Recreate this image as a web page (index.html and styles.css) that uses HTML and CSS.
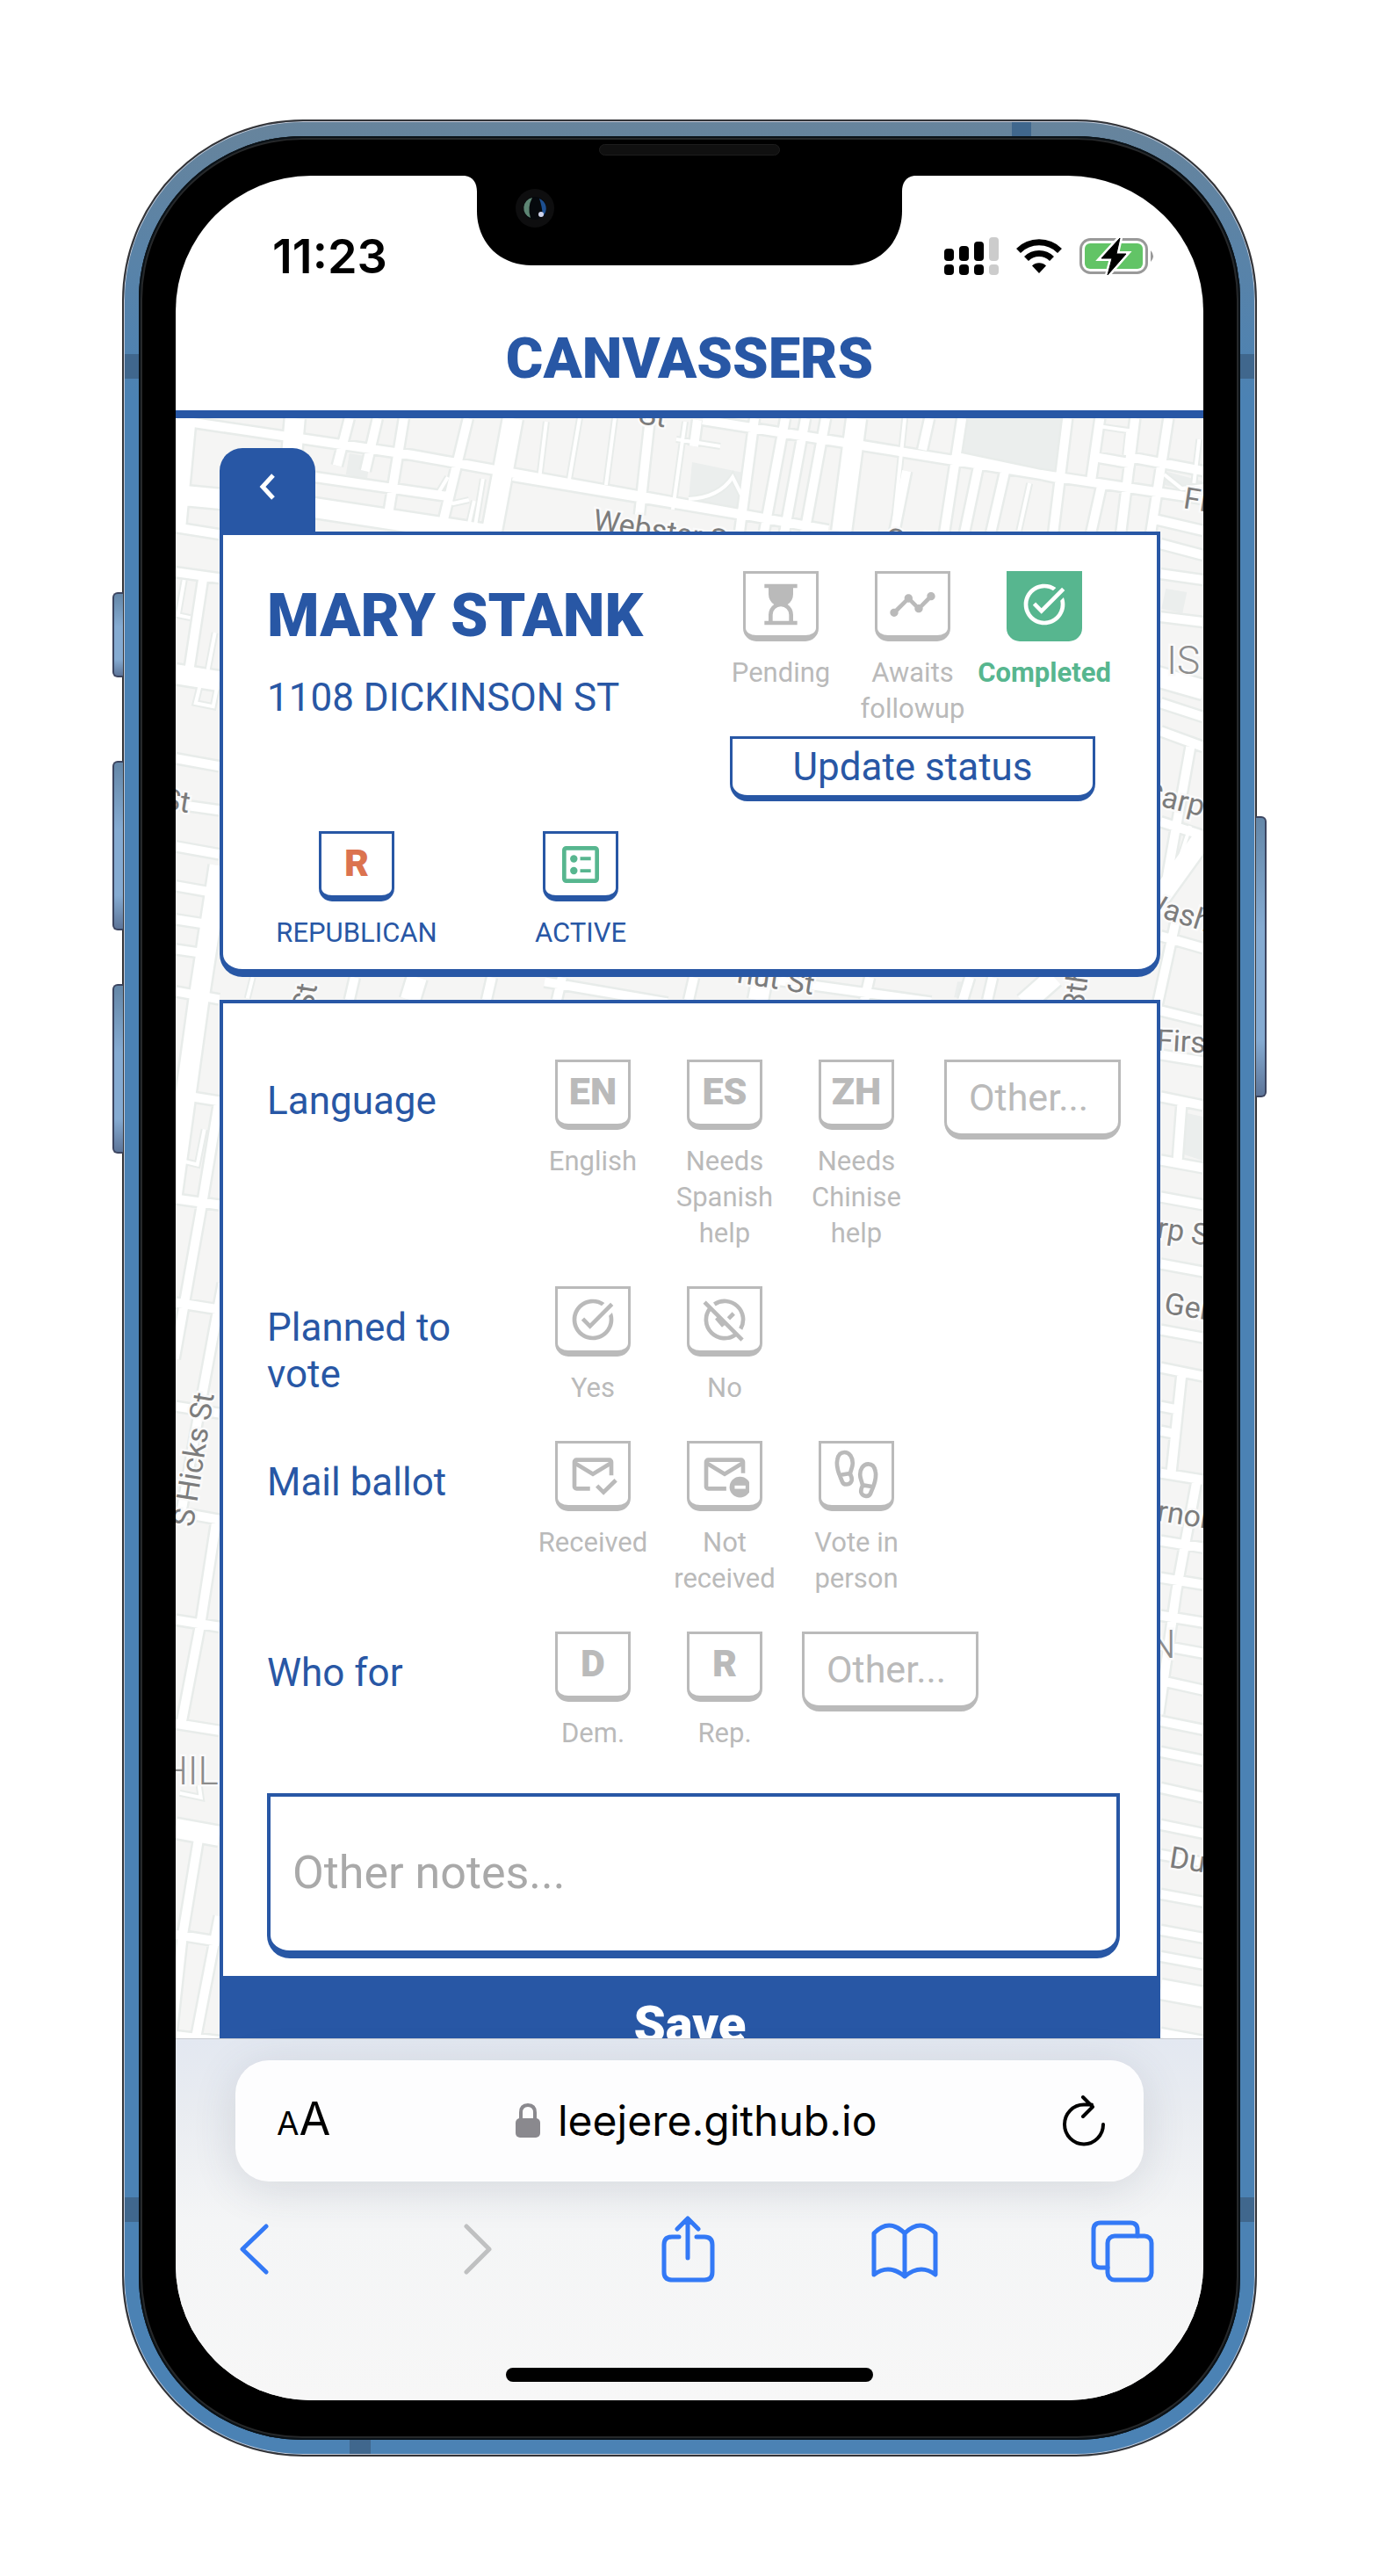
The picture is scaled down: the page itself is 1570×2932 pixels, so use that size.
FILE: index.html
```html
<!DOCTYPE html>
<html lang="en">
<head>
<meta charset="utf-8">
<meta name="viewport" content="width=device-width, initial-scale=1">
<title>Canvassers</title>
<link rel="stylesheet" href="styles.css">
</head>
<body>
<svg class="symbols" aria-hidden="true">
  <symbol id="i-hourglass" viewBox="0 -960 960 960"><path d="M320-160h320v-120q0-66-47-113t-113-47q-66 0-113 47t-47 113v120Zm-160 80v-80h80v-120q0-61 28.500-114.500T348-480q-51-32-79.500-85.500T240-680v-120h-80v-80h640v80h-80v120q0 61-28.500 114.500T612-480q51 32 79.500 85.500T720-280v120h80v80H160Z"/></symbol>
  <symbol id="i-timeline" viewBox="0 0 24 24"><path d="M23 8c0 1.100-.9 2-2 2-.18 0-.35-.02-.51-.07l-3.560 3.550c.05.16.07.34.07.52 0 1.100-.9 2-2 2s-2-.9-2-2c0-.18.02-.36.07-.52l-2.550-2.550c-.16.05-.34.07-.52.07s-.36-.02-.52-.07l-4.550 4.560c.05.16.07.33.07.51 0 1.100-.9 2-2 2s-2-.9-2-2 .9-2 2-2c.18 0 .35.02.51.07l4.560-4.550C8.020 9.360 8 9.180 8 9c0-1.100.9-2 2-2s2 .9 2 2c0 .18-.02.36-.07.52l2.550 2.550c.16-.05.34-.07.52-.07s.36.02.52.07l3.550-3.560C19.020 8.350 19 8.180 19 8c0-1.100.9-2 2-2s2 .9 2 2z"/></symbol>
  <symbol id="i-done" viewBox="0 0 24 24"><path d="M22 5.180L10.590 16.600l-4.240-4.240 1.410-1.410 2.830 2.830 10-10L22 5.180zm-2.210 5.040c.13.57.21 1.170.21 1.780 0 4.420-3.580 8-8 8s-8-3.580-8-8 3.580-8 8-8c1.580 0 3.040.46 4.280 1.250l1.440-1.440C16.100 2.670 14.130 2 12 2 6.480 2 2 6.480 2 12s4.480 10 10 10 10-4.480 10-10c0-1.190-.22-2.330-.6-3.390l-1.610 1.610z"/></symbol>
  <symbol id="i-notdone" viewBox="0 0 24 24"><g fill="none" stroke="currentColor" stroke-width="2"><path d="M7 4.500A9 9 0 0 1 19.800 16.500M17.300 19.300A9 9 0 0 1 4.800 6.600M2.200 3.500L20.600 21.900M13.900 11.500l2.500-2.500"/></g><path d="M7.300 11.800l1.500-1.500 3.800 3.800-1.900 1.700z"/></symbol>
  <symbol id="i-mailok" viewBox="0 0 24 24"><g fill="none" stroke="currentColor" stroke-width="2"><path d="M10.600 19H4a1 1 0 0 1-1-1V6a1 1 0 0 1 1-1h16a1 1 0 0 1 1 1v6.500M3 6.400l9 5.500 9-5.500M14 17.600l3.200 3.200 6-5.900"/></g></symbol>
  <symbol id="i-mailno" viewBox="0 0 24 24"><path fill="none" stroke="currentColor" stroke-width="2" d="M12.800 19H4a1 1 0 0 1-1-1V6a1 1 0 0 1 1-1h16a1 1 0 0 1 1 1v5.500M3 6.400l9 5.500 9-5.500"/><circle cx="19.500" cy="18.300" r="5.100"/><path fill="#fff" d="M16.900 17.500h5.300v1.600h-5.300z"/></symbol>
  <symbol id="i-feet" viewBox="0 0 24 24"><g fill="none" stroke="currentColor" stroke-width="2"><path id="foot" d="M3.600 12C2.600 9 2.200 7 2.700 4.900 3.100 2.700 4.300 1.300 6.200 1.300c2.600 0 4 2.600 4 5.200 0 2-1 3.500-1.200 5.300M3.800 12.400l5-.8c.9 1.500 1.100 2.400.9 3.500-.6 2.300-4 2.500-4.700.3-.3-1-.9-2-1.200-3z"/><use href="#foot" transform="translate(24 5.700) scale(-1 1)"/></g></symbol>
  <symbol id="i-ballot" viewBox="0 0 24 24"><rect x="4" y="4" width="16" height="16" rx="1" fill="none" stroke="currentColor" stroke-width="2"/><circle cx="8.700" cy="9.200" r="1.800"/><circle cx="8.700" cy="15" r="1.800"/><path d="M11.800 8.300H17v1.700h-5.200zM11.800 14.200H17v1.700h-5.200z"/></symbol>
</svg>

<main class="phone">
  <i class="side side-mute"></i><i class="side side-up"></i><i class="side side-down"></i><i class="side side-power"></i>
  <i class="band band-tl"></i><i class="band band-tr"></i><i class="band band-bl"></i><i class="band band-br"></i><i class="band band-top"></i><i class="band band-bottom"></i>
  <div class="bezel">
    <div class="speaker"></div>
    <div class="screen">
      <svg class="notch" viewBox="0 0 512 102" aria-hidden="true">
        <path d="M0 0C10 1 14 9 14 18V40C14 76 40 102 76 102H436C472 102 498 76 498 40V18C498 9 502 1 512 0Z"/>
        <circle cx="80" cy="37" r="22" fill="#0e0e0f"/><circle cx="80" cy="37" r="13" fill="#06090d"/>
        <path d="M77 25a12 12 0 0 0-2 23q-4-12 2-23z" fill="#5d8573"/>
        <path d="M85 26a12 12 0 0 1 4 20q-1-12-4-20z" fill="#1d4f90"/>
        <circle cx="87" cy="44" r="3" fill="#cfd3ea"/>
      </svg>

      <div class="status">
        <span class="time">11:23</span>
        <svg width="62" height="44" viewBox="0 0 62 44"><rect y="13" width="11" height="14" rx="4"/><rect x="17" y="10" width="11" height="17" rx="4"/><rect x="34" y="5" width="11" height="22" rx="4"/><rect x="51" width="11" height="27" rx="4" fill="#ccc"/><rect y="31" width="11" height="12" rx="4"/><rect x="17" y="31" width="11" height="12" rx="4"/><rect x="34" y="31" width="11" height="12" rx="4"/><rect x="51" y="31" width="11" height="12" rx="4" fill="#ccc"/></svg>
        <svg width="52" height="40" viewBox="0 0 52 40"><path d="M26 39l-8-8.500a11.500 11.500 0 0 1 16 0z"/><path fill="none" stroke="#000" stroke-width="7" d="M11.500 22.500a20.500 20.500 0 0 1 29 0M2.500 13.500a33.500 33.500 0 0 1 47 0"/></svg>
        <svg width="87" height="44" viewBox="0 0 87 44"><rect x="1.500" y="2.500" width="75" height="38" rx="11" fill="none" stroke="#999" stroke-width="3"/><rect x="6" y="7" width="66" height="29" rx="6" fill="#62c466"/><path d="M81 15q6 6.500 0 13z" fill="#999"/><path d="M46 1L25 24h12l-5 19 21-24H42z" stroke="#fff" stroke-width="6"/><path d="M46 1L25 24h12l-5 19 21-24H42z" stroke="#000" stroke-width="1"/></svg>
      </div>
      <h1 class="title">CANVASSERS</h1>

      <section class="page">
        <svg class="map" viewBox="200 476 1170 1844" preserveAspectRatio="xMidYMid slice" aria-hidden="true">
          <defs>
            <path id="r-thin" d="M1030 476l-12 116M780 480l-14 100M700 476l-10 76M660 476l-12 70M622 480l-8 66M1172 550l-12 54M550 545l-10 60M510 543l-12 20 18 10 18-4M784 568q35-2 50-25l10 20M540 570l-8 35M770 500l50 8M1250 485l34 5-3 28M1365 500l-6 50M1325 540l20 16 25-3M210 660l-7 40 14 3M228 700l-10 30M245 720l-8 42M228 780l-5 20 20 4 4-20M233 1285l-8 40-25-6M288 1112l-6 24M1355 940l-12 36M1325 655l35 6M205 2040l24 5-2-14"/>
            <path id="r-mid" d="M200 478L470 518L943 603M800 478L981 507L1204 543L1370 568M359 543L510 565M584 542L840 585M1090 520L1204 544M1285 520L1370 536M398 476l-14 54M430 476l-14 60M460 476l-19 117M533 476l-29 120M740 476l-12 110M794 478l-4 30M859 476l-17 129M894 476l-24 129M917 476l-24 130M940 476l-24 130M1032 536l-14 70M1058 476l-8 36M1095 476l-20 130M1114 530l-16 76M1144 536l-16 70M1215 476l-16 130M1254 552l-12 54M1252 476l-10 70M1292 476l-16 130M1330 476l-20 130M1245 520l46 8M1310 590l60 14M1321 619l49 13M1321 653l49 7M1321 702l49 6M1321 800l49 16M1321 832l49 18M1355 850l-34 190M1321 935l49 16M1321 1065l49 14M1340 1040l-24 110M1321 1150l49 12
              M200 600l50 8M200 651l50 7M200 863l50 9M200 915l50 7M200 963l50 9M200 1008l45 8M200 1046l38 6M200 1080l34 5M200 1128l50 9M200 1245l50 8M200 1364l50 7M200 1482l50 8M200 1600l50 8M200 1720l50 9M200 1843l50 8M200 1961l50 8M200 2201l50 8M200 2316l50 6M232 655l-16 105M250 1250l-19 116-32 180M254 1460l-24 130-25 140M247 1728l-18 117-23 120M227 2088l-19 115-12 110M250 2180l-27 140
              M1321 1200l49 8M1321 1248l49 10M1321 1320l49 9M1321 1362l49 9M1321 1438l49 9M1321 1513l49 9M1321 1556l49 10M1321 1600l20 4M1321 1628l20 4M1345 1257l-5 68M1345 1564l-12 114M1363 1680l-24 130-20 140M1321 1676l49 8M1321 1753l49 8M1321 1795l49 8M1321 1838l49 8M1321 1872l49 9M1321 1912l49 11M1321 1958l49 10M1321 1993l49 10M1321 2034l49 11M1321 2076l49 10M1321 2110l49 9M1321 2155l49 9M1321 2196l49 9M1321 2226l49 9M1321 2313l49 9
              M404 1112l-6 26M560 1112l-6 26M640 1112l-6 26M790 1112l-6 26M990 1112l-6 26M1104 1112l-8 26M1130 1112l-6 26M620 1117l140 24M860 1112l200 28"/>
            <path id="r-wide" d="M212 476L200 605M336 476L326 590M584 476L560 605M975 476L958 605M200 563L359 578L556 608M200 767l50 8M250 985L228 1128L196 1360M1300 765l70 20M1321 1020l49-68M1200 1112l-34 30M475 1112l-8 26M868 1112l-5 26M200 2080l50 9M1321 2263l49 9"/>
          </defs>
          <rect x="200" y="476" width="1170" height="1844" fill="#f5f5f4"/>
          <path fill="#ebeeed" d="M1099 476h109l-8 67-105-20zM788 526l58 12-5 40-57-10zM398 516l24 4-4 26-24-6zM1327 670l24 4-5 24-24-5zM1345 1265l25 6v50l-30-10zM1325 536l45 12v14l-45-10zM1090 1117h8l-4 18h-8z"/>
          <g fill="none" stroke="#e8ecea"><use href="#r-thin" stroke-width="8"/><use href="#r-mid" stroke-width="15"/><use href="#r-wide" stroke-width="27"/></g>
          <g fill="none" stroke="#fff"><use href="#r-thin" stroke-width="4"/><use href="#r-mid" stroke-width="10"/><use href="#r-wide" stroke-width="22"/></g>
          <g class="maptext">
            <text transform="translate(726 482) rotate(8)">St</text>
            <text transform="translate(674 603) rotate(9)">Webster St</text>
            <text transform="translate(1006 624) rotate(9)">Oak</text>
            <text transform="translate(1346 578) rotate(9)">Fitz</text>
            <text transform="translate(184 920) rotate(9)">St</text>
            <text transform="translate(1299 912) rotate(14)">Carp</text>
            <text transform="translate(1294 1035) rotate(18)">Wash</text>
            <text transform="translate(838 1118) rotate(9)">nut St</text>
            <text transform="translate(1233 1150) rotate(-82)">8th</text>
            <text transform="translate(356 1152) rotate(-80)">St</text>
            <text transform="translate(1316 1195) rotate(3)">First</text>
            <text transform="translate(1316 1408) rotate(9)">rp St</text>
            <text transform="translate(1324 1494) rotate(9)">Gen</text>
            <text transform="translate(1316 1730) rotate(9)">rnor</text>
            <text transform="translate(1330 2124) rotate(9)">Dud</text>
            <text transform="translate(220 1738) rotate(-81)">S Hicks St</text>
            <g class="district"><text x="1328" y="767">IS</text><text x="183" y="2030">HIL</text><text x="1307" y="1886">N</text></g>
          </g>
        </svg>

        <div class="sheet">
          <button class="back" aria-label="Back"><svg width="20" height="30" viewBox="0 0 20 30"><path d="M16 2L4 15l12 13" fill="none" stroke="#fff" stroke-width="5"/></svg></button>
          <article class="card voter">
            <div class="voter-top">
              <div class="who">
                <h2>MARY STANK</h2>
                <p>1108 DICKINSON ST</p>
              </div>
              <div class="state">
                <div class="options">
                  <label class="opt"><input type="radio" name="state"><span class="key"><svg class="icon"><use href="#i-hourglass"/></svg></span>Pending</label>
                  <label class="opt"><input type="radio" name="state"><span class="key"><svg class="icon"><use href="#i-timeline"/></svg></span>Awaits followup</label>
                  <label class="opt picked"><input type="radio" name="state" checked><span class="key"><svg class="icon"><use href="#i-done"/></svg></span>Completed</label>
                </div>
                <button class="update">Update status</button>
              </div>
            </div>
            <div class="badges">
              <div class="badge"><span class="key rep">R</span>REPUBLICAN</div>
              <div class="badge"><span class="key act"><svg class="icon"><use href="#i-ballot"/></svg></span>ACTIVE</div>
            </div>
          </article>

          <form class="card survey">
            <div class="questions">
              <div class="row" role="radiogroup" aria-labelledby="q1"><span class="q" id="q1">Language</span>
                <div class="options">
                  <label class="opt"><input type="radio" name="lang"><span class="key">EN</span>English</label>
                  <label class="opt"><input type="radio" name="lang"><span class="key">ES</span>Needs Spanish help</label>
                  <label class="opt"><input type="radio" name="lang"><span class="key">ZH</span>Needs Chinise help</label>
                </div>
                <input class="other other-end" type="text" placeholder="Other..." aria-label="Other language">
              </div>
              <div class="row" role="radiogroup" aria-labelledby="q2"><span class="q" id="q2">Planned to vote</span>
                <div class="options">
                  <label class="opt"><input type="radio" name="plan"><span class="key"><svg class="icon"><use href="#i-done"/></svg></span>Yes</label>
                  <label class="opt"><input type="radio" name="plan"><span class="key"><svg class="icon"><use href="#i-notdone"/></svg></span>No</label>
                </div>
              </div>
              <div class="row" role="radiogroup" aria-labelledby="q3"><span class="q" id="q3">Mail ballot</span>
                <div class="options">
                  <label class="opt"><input type="radio" name="mail"><span class="key"><svg class="icon"><use href="#i-mailok"/></svg></span>Received</label>
                  <label class="opt"><input type="radio" name="mail"><span class="key"><svg class="icon"><use href="#i-mailno"/></svg></span>Not received</label>
                  <label class="opt"><input type="radio" name="mail"><span class="key"><svg class="icon"><use href="#i-feet"/></svg></span>Vote in person</label>
                </div>
              </div>
              <div class="row" role="radiogroup" aria-labelledby="q4"><span class="q" id="q4">Who for</span>
                <div class="options">
                  <label class="opt"><input type="radio" name="for"><span class="key">D</span>Dem.</label>
                  <label class="opt"><input type="radio" name="for"><span class="key">R</span>Rep.</label>
                </div>
                <input class="other" type="text" placeholder="Other..." aria-label="Other candidate">
              </div>
            </div>
            <textarea class="notes" rows="1" placeholder="Other notes..." aria-label="Other notes"></textarea>
            <button class="save" type="button">Save</button>
          </form>
        </div>
      </section>

      <nav class="browser">
        <div class="url">
          <button class="aa" aria-label="Page settings"><small>A</small>A</button>
          <span class="host"><svg width="28" height="40" viewBox="0 0 28 40"><path d="M6 20V10.500Q6 2 14 2t8 8.500V20" fill="none" stroke="#8a898e" stroke-width="4"/><rect y="17" width="28" height="22" rx="5" fill="#8a898e"/></svg>leejere.github.io</span>
          <button aria-label="Reload"><svg width="50" height="58" viewBox="0 0 50 58"><path d="M47 33a22 22.500 0 1 1-22-22.500h9M24 2l11 11-11 11" fill="none" stroke="#000" stroke-width="4" stroke-linecap="round" stroke-linejoin="round"/></svg></button>
        </div>
        <div class="tools">
          <button aria-label="Back"><svg viewBox="0 0 76 76"><path d="M52 12L25 38l27 26"/></svg></button>
          <button class="off" aria-label="Forward"><svg viewBox="0 0 76 76"><path d="M33 12l26 26-26 26"/></svg></button>
          <button aria-label="Share"><svg viewBox="0 0 76 76"><path d="M28 24h-8q-9 0-9 9v31q0 9 9 9h37q9 0 9-9V33q0-9-9-9h-9M38 48V3M26 15L38 3l12 12"/></svg></button>
          <button aria-label="Bookmarks"><svg viewBox="0 0 76 76"><path d="M38 20v49M38 20Q20 2 3 20v47q17-13 35 2 18-15 35-2V20Q56 2 38 20"/></svg></button>
          <button aria-label="Tabs"><svg viewBox="0 0 76 76"><rect x="22" y="23" width="50" height="50" rx="8"/><path d="M56 23v-7q0-8-8-8H14q-8 0-8 8v35q0 8 8 8h8"/></svg></button>
        </div>
        <div class="home"></div>
      </nav>
    </div>
  </div>
</main>
</body>
</html>
```
FILE: styles.css
```css
:root {
  --blue: #2857a5;
  --grey: #bababa;
  --green: #57b68f;
}
* { box-sizing: border-box; }
body {
  margin: 0;
  padding: 136px 139px 135px;
  background: #fff;
  font-family: Roboto, "Open Sans", sans-serif;
}
button, input, textarea { font: inherit; margin: 0; }
button { background: none; border: 0; padding: 0; color: #000; cursor: pointer; }
svg { display: block; }
.symbols { position: absolute; width: 0; height: 0; }

/* handset */
.phone {
  position: relative;
  padding: 17px;
  border: 2px solid #333438;
  border-radius: 206px;
  background: linear-gradient(#67849c, #4b82b4 12%, #4b82b4);
  box-shadow: inset 0 0 0 1px #c3c9d6;
}
.bezel {
  position: relative;
  padding: 45px 42px;
  border-radius: 186px;
  background: #000;
  box-shadow: inset 0 0 0 2px #0a1218, inset 0 0 0 4px #26282a;
}
.speaker {
  position: absolute;
  top: 9px;
  left: 50%;
  width: 206px;
  height: 13px;
  margin-left: -103px;
  border-radius: 7px;
  background: #101010;
  border: 1px solid #1d1d1d;
}
.side {
  position: absolute;
  left: -13px;
  width: 12px;
  border: 2px solid #3c4560;
  border-right: 0;
  border-radius: 6px 0 0 6px;
  background: linear-gradient(#6487a8, #85abd2 40%, #85abd2 80%, #5d7599);
}
.side-mute { top: 536px; height: 97px; }
.side-up { top: 728px; height: 193px; }
.side-down { top: 982px; height: 193px; }
.side-power {
  top: 791px;
  left: auto;
  right: -13px;
  height: 320px;
  border: 2px solid #3c4560;
  border-left: 0;
  border-radius: 0 6px 6px 0;
}
.band { position: absolute; background: #40678d; width: 16px; height: 28px; }
.band-tl { left: 1px; top: 265px; }
.band-tr { right: 1px; top: 265px; }
.band-bl { left: 1px; bottom: 265px; }
.band-br { right: 1px; bottom: 265px; }
.band-top { width: 22px; height: 16px; top: 1px; right: 255px; }
.band-bottom { width: 24px; height: 16px; bottom: 1px; left: 257px; }

.screen {
  position: relative;
  display: flex;
  flex-direction: column;
  aspect-ratio: 1170 / 2532;
  overflow: hidden;
  border-radius: 154px;
  background: #fff;
}
.notch {
  position: absolute;
  top: 0;
  left: 50%;
  width: 512px;
  margin-left: -256px;
}

/* status bar and title */
.status {
  display: flex;
  align-items: center;
  gap: 20px;
  height: 173px;
  padding: 11px 54px 0 110px;
}
.time {
  margin-right: auto;
  font: 600 54px/60px Inter, sans-serif;
}
.title {
  flex: none;
  margin: 0;
  height: 103px;
  border-bottom: 9px solid var(--blue);
  color: var(--blue);
  font-size: 65px;
  line-height: 70px;
  font-weight: 900;
  text-align: center;
}

/* scrolling page */
.page {
  position: relative;
  flex: 1;
  min-height: 0;
  overflow: hidden;
}
.map { position: absolute; inset: 0; width: 100%; height: 100%; }
.maptext text {
  font: 34px Roboto, sans-serif;
  fill: #7c7c7c;
  stroke: #fafafa;
  stroke-width: 5px;
  paint-order: stroke;
}
.maptext .district text { font-size: 44px; font-weight: 300; fill: #8c8c8c; }

.sheet { position: relative; padding: 34px 49px 0 50px; }
.back {
  display: grid;
  place-items: center;
  width: 109px;
  height: 95px;
  padding-bottom: 8px;
  border-radius: 26px 26px 0 0;
  background: var(--blue);
}
.card {
  border: 4px solid var(--blue);
  background: #fff;
  color: var(--blue);
}
.voter {
  padding: 41px 53px 20px 50px;
  border-bottom-width: 9px;
  border-radius: 0 0 26px 26px;
}
.voter-top { display: flex; justify-content: space-between; }
.who { padding-top: 16px; }
.who h2 { margin: 0; font-size: 68px; line-height: 70px; font-weight: 900; }
.who p { margin: 32px 0 0; font-size: 44px; line-height: 53px; }
.state { width: 450px; }
.options { display: flex; color: var(--grey); }
.opt {
  position: relative;
  display: flex;
  flex-direction: column;
  align-items: center;
  width: 150px;
  font-size: 31px;
  line-height: 41px;
  text-align: center;
}
.opt input { position: absolute; opacity: 0; }
.key {
  display: grid;
  place-items: center;
  width: 86px;
  height: 80px;
  margin-bottom: 15px;
  border: 3px solid currentColor;
  border-bottom-width: 7px;
  border-radius: 0 0 15px 15px;
  font-size: 43px;
  line-height: 64px;
  font-weight: 900;
  padding-bottom: 4px;
}
.key:has(svg) { padding-bottom: 0; }
.icon { width: 56px; height: 56px; fill: currentColor; }
.picked { color: var(--green); font-weight: 700; }
.picked .key { background: var(--green); border-color: var(--green); color: #fff; }
.update {
  display: block;
  width: 416px;
  height: 74px;
  margin: 11px auto 0;
  border: 3px solid var(--blue);
  border-bottom-width: 7px;
  border-radius: 0 0 20px 20px;
  color: var(--blue);
  font-size: 44px;
  line-height: 53px;
}
.badges { display: flex; gap: 55px; margin: 34px 0 1px 2px; }
.badge {
  display: flex;
  flex-direction: column;
  align-items: center;
  width: 200px;
  font-size: 31px;
  line-height: 41px;
}
.rep, .act { border-color: var(--blue); }
.rep { color: #db734f; }
.act { color: var(--green); }

.survey { margin-top: 26px; border-bottom: 0; }
.questions {
  display: grid;
  gap: 40px;
  padding: 64px 41px 0 50px;
}
.row { display: flex; align-items: flex-start; }
.q {
  width: 296px;
  padding: 21px 60px 0 0;
  font-size: 44px;
  line-height: 53px;
}
.other {
  width: 201px;
  height: 91px;
  margin-left: 13px;
  padding: 0 0 2px 25px;
  border: 3px solid var(--grey);
  border-bottom-width: 7px;
  border-radius: 0 0 20px 20px;
  font-size: 43px;
  background: #fff;
}
.other-end { margin-left: auto; }
::placeholder { color: #bababa; opacity: 1; }
.notes {
  display: block;
  width: calc(100% - 92px);
  height: 188px;
  margin: 48px 42px 20px 50px;
  padding: 56px 25px;
  border: 4px solid var(--blue);
  border-bottom-width: 9px;
  border-radius: 0 0 26px 26px;
  font-size: 52px;
  line-height: 62px;
  resize: none;
  overflow: hidden;
}
.notes::placeholder { color: #a9a9a9; }
.save {
  display: block;
  width: 100%;
  height: 110px;
  background: var(--blue);
  color: #fff;
  font-size: 58px;
  line-height: 110px;
  font-weight: 900;
}

/* browser chrome */
.browser {
  position: relative;
  padding: 24px 68px 21px;
  background: linear-gradient(#e3e8f1, #e9ecf1 20%, #f4f5f6 50%, #f7f7f7);
  box-shadow: 0 -1px 0 #c9ccd2;
}
.url {
  display: flex;
  align-items: center;
  justify-content: space-between;
  height: 138px;
  padding: 0 43px 0 47px;
  border-radius: 38px;
  background: #fdfdfe;
  box-shadow: 0 8px 50px rgba(60, 70, 90, .14);
  font: 48px/60px Inter, sans-serif;
}
.aa { font-size: 52px; }
.aa small { font-size: 37px; }
.host { display: flex; align-items: center; gap: 20px; }
.tools {
  display: flex;
  justify-content: space-between;
  margin: 39px -13px 97px -17px;
}
.tools svg {
  width: 76px;
  height: 76px;
  fill: none;
  stroke: #3379f6;
  stroke-width: 5;
  stroke-linecap: round;
  stroke-linejoin: round;
}
.tools .off svg { stroke: #bfc0c1; }
.home {
  width: 418px;
  height: 16px;
  margin: 0 auto;
  border-radius: 8px;
  background: #000;
}
```
